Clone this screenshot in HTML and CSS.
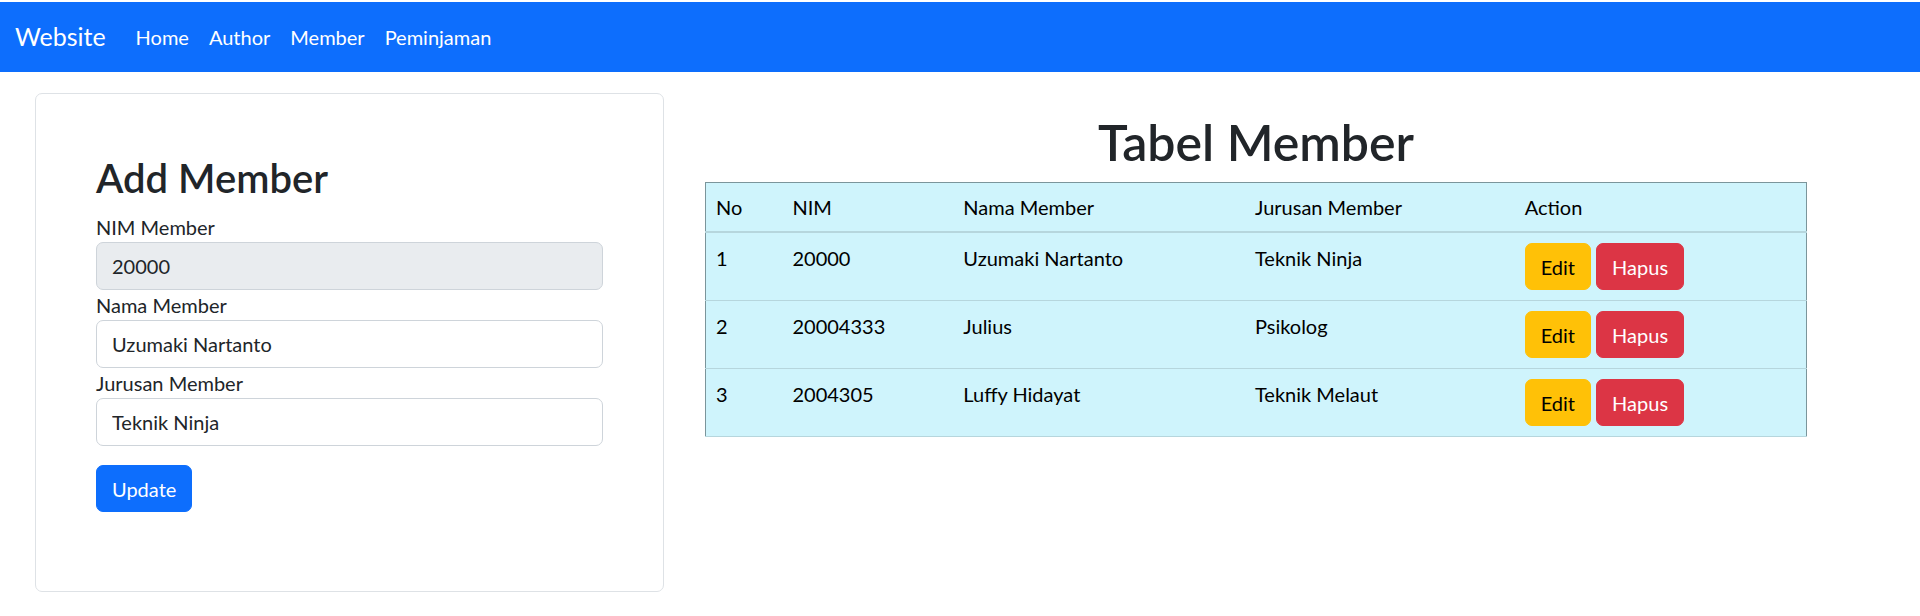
FILE: index.html
```html
<!DOCTYPE html>
<html lang="id">
<head>
<meta charset="utf-8">
<title>Website</title>
<link rel="stylesheet" href="styles.css">
</head>
<body>
<nav class="navbar">
  <a class="brand" href="#">Website</a>
  <ul class="nav">
    <li><a class="nav-link" href="#">Home</a></li>
    <li><a class="nav-link" href="#">Author</a></li>
    <li><a class="nav-link" href="#">Member</a></li>
    <li><a class="nav-link" href="#">Peminjaman</a></li>
  </ul>
</nav>
<main class="main">
  <section class="card">
    <h2 class="card-title">Add Member</h2>
    <form class="form">
      <label class="label" for="nim">NIM Member</label>
      <input class="input input-readonly" id="nim" type="text" value="20000" readonly>
      <label class="label" for="nama">Nama Member</label>
      <input class="input" id="nama" type="text" value="Uzumaki Nartanto">
      <label class="label" for="jurusan">Jurusan Member</label>
      <input class="input" id="jurusan" type="text" value="Teknik Ninja">
      <button class="btn btn-primary btn-update" type="button">Update</button>
    </form>
  </section>
  <section class="content">
    <h1 class="page-title">Tabel Member</h1>
    <table class="table">
      <colgroup>
        <col class="c-no"><col class="c-nim"><col class="c-nama"><col class="c-jurusan"><col class="c-action">
      </colgroup>
      <thead>
        <tr><th>No</th><th>NIM</th><th>Nama Member</th><th>Jurusan Member</th><th>Action</th></tr>
      </thead>
      <tbody>
        <tr><td>1</td><td>20000</td><td>Uzumaki Nartanto</td><td>Teknik Ninja</td>
          <td class="actions"><a class="btn btn-warning" href="#">Edit</a> <a class="btn btn-danger" href="#">Hapus</a></td></tr>
        <tr><td>2</td><td>20004333</td><td>Julius</td><td>Psikolog</td>
          <td class="actions"><a class="btn btn-warning" href="#">Edit</a> <a class="btn btn-danger" href="#">Hapus</a></td></tr>
        <tr><td>3</td><td>2004305</td><td>Luffy Hidayat</td><td>Teknik Melaut</td>
          <td class="actions"><a class="btn btn-warning" href="#">Edit</a> <a class="btn btn-danger" href="#">Hapus</a></td></tr>
      </tbody>
    </table>
  </section>
</main>
</body>
</html>
```
FILE: styles.css
```css
* { box-sizing: border-box; }

body {
  margin: 0;
  padding-top: 2px;
  font-family: "Segoe UI", Lato, "Open Sans", sans-serif;
  font-size: 20px;
  line-height: 1.5;
  color: #212529;
  background: #fff;
}

a { text-decoration: none; }

.navbar {
  display: flex;
  align-items: center;
  height: 70px;
  padding: 10px 15px;
  background: #0d6efd;
}

.brand {
  color: #fff;
  font-size: 25px;
  line-height: 37.5px;
  margin-right: 20px;
}

.nav {
  display: flex;
  list-style: none;
  margin: 0;
  padding: 0;
}

.nav-link {
  display: block;
  color: #fff;
  padding: 10px;
  line-height: 30px;
}

.main {
  display: flex;
  align-items: flex-start;
  padding-left: 35px;
}

.card {
  width: 629px;
  margin-top: 21px;
  border: 1px solid #dee2e6;
  border-radius: 7px;
  padding: 60px 60px 79px;
}

.card-title {
  margin: 0 0 10px;
  font-size: 40px;
  line-height: 48px;
  font-weight: 600;
}

.form { margin: 0; }

.label {
  display: block;
  line-height: 30px;
}

.input {
  display: block;
  width: 100%;
  height: 48px;
  padding: 7.5px 15px;
  border: 1px solid #ced4da;
  border-radius: 7px;
  font: inherit;
  line-height: 30px;
  color: #212529;
  background: #fff;
}

.input-readonly { background: #e9ecef; }

.btn {
  display: inline-block;
  padding: 7.5px 15px;
  border: 1px solid transparent;
  border-radius: 7px;
  font: inherit;
  line-height: 30px;
  vertical-align: middle;
}

.btn-primary { background: #0d6efd; color: #fff; border-color: #0d6efd; }
.btn-warning { background: #ffc107; color: #000; border-color: #ffc107; }
.btn-danger { background: #dc3545; color: #fff; border-color: #dc3545; }

.btn-update { margin-top: 19px; }

.content {
  width: 1102px;
  margin-left: 41px;
  margin-top: 40px;
}

.page-title {
  margin: 0 0 10px;
  text-align: center;
  font-size: 50px;
  line-height: 60px;
  font-weight: 600;
}

.table {
  width: 100%;
  border-collapse: collapse;
  background: #cff4fc;
  color: #000;
  border-top: 1px solid #7b959b;
  border-left: 1px solid #7b959b;
  border-right: 1px solid #7b959b;
}

.table th,
.table td {
  padding: 10px;
  text-align: left;
  vertical-align: top;
  font-weight: 400;
  border-bottom: 1px solid #b6d6dd;
}

.table thead th {
  padding-top: 9px;
  padding-bottom: 9px;
  border-bottom: 2px solid #b6d6dd;
}

.c-no { width: 77px; }
.c-nim { width: 171px; }
.c-nama { width: 292px; }
.c-jurusan { width: 270px; }
.c-action { width: 292px; }

.actions { white-space: nowrap; }
```
